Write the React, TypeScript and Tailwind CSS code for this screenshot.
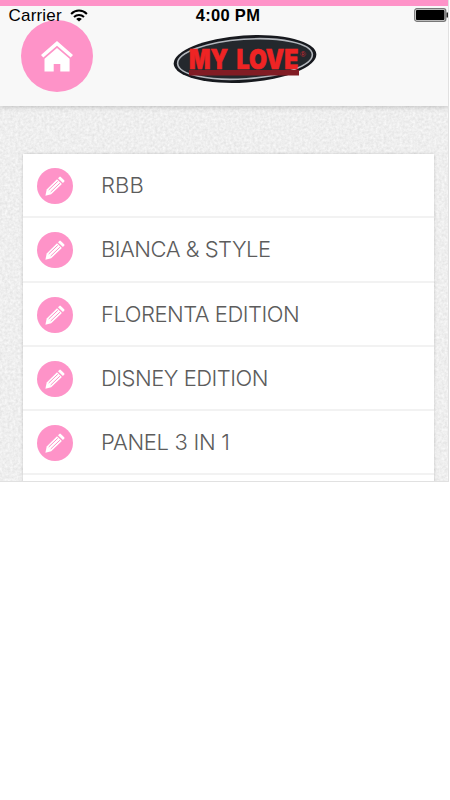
import React from 'react';

const items = ['RBB', 'BIANCA & STYLE', 'FLORENTA EDITION', 'DISNEY EDITION', 'PANEL 3 IN 1'];

const tracking: Record<string, string> = {
  'RBB': 'tracking-[0.1px]',
  'BIANCA & STYLE': 'tracking-[-0.5px]',
  'FLORENTA EDITION': 'tracking-[-0.5px]',
  'DISNEY EDITION': 'tracking-[-0.5px]',
  'PANEL 3 IN 1': 'tracking-[-0.3px]',
};

function WifiIcon() {
  return (
    <svg width="18" height="13" viewBox="0 0 18 13" fill="none" stroke="#000" strokeWidth="2">
      <path d="M1.1 5C5.6 .4 12.4 .4 16.9 5" />
      <path d="M4 8C6.9 5.2 11.1 5.2 14 8" />
      <path d="M9 12.6L6.2 9.9Q9 7.5 11.8 9.9Z" fill="#000" stroke="none" />
    </svg>
  );
}

function BatteryIcon() {
  return (
    <svg width="34" height="14" viewBox="0 0 34 14">
      <rect x=".75" y=".75" width="31" height="12.5" rx="2" fill="#fff" stroke="#777" strokeWidth="1.3" />
      <rect x="2" y="2" width="28.5" height="10" rx=".8" fill="#000" />
      <path d="M32.5 4.5H34V9.5H32.5Z" fill="#222" />
    </svg>
  );
}

function StatusBar() {
  return (
    <div className="absolute inset-x-0 top-[6px] z-10 grid h-[18px] grid-cols-3 items-center text-[17px] leading-[18px] text-black">
      <div className="flex h-[18px] items-center gap-[8px] pl-[8.5px]">
        <span className="pt-px tracking-[0.2px]">Carrier</span>
        <WifiIcon />
      </div>
      <span className="h-[18px] pl-[8px] text-center text-[16.5px] font-bold tracking-[0.3px]">4:00 PM</span>
      <div className="flex h-[18px] items-center justify-end">
        <BatteryIcon />
      </div>
    </div>
  );
}

function HomeIcon() {
  return (
    <svg width="32" height="31" viewBox="0 0 32 31" fill="#fff">
      <path d="M16 0L32 14L29.7 16.6L16 4.8L2.3 16.6L0 14Z" />
      <path d="M16 7L28.6 17.8V30.5H19.3V23H12.7V30.5H3.5V17.8Z" />
    </svg>
  );
}

function PencilIcon() {
  return (
    <svg width="20" height="20" viewBox="0 0 20 20">
      <g fill="#fff">
        <path d="M14.3 .9Q15 .2 15.8 .9L19.2 4.3Q19.9 5 19.2 5.8L17.9 7L13 2.2Z" />
        <path d="M12 3.2L16.9 8L6.2 18.2L.4 19.7L1.7 13.4Z" />
      </g>
      <path d="M3.7 14L12.8 5.3M5.7 16L14.9 7.2" stroke="#fe93c8" strokeWidth="1" />
    </svg>
  );
}

function Logo() {
  return (
    <svg width="146" height="52" viewBox="0 0 146 52">
      <g transform="rotate(-4 73 26)">
        <ellipse cx="73" cy="26" rx="71.5" ry="23.5" fill="#17191e" />
        <ellipse cx="73" cy="26" rx="67.5" ry="19.8" fill="#24282d" stroke="#b3b7bd" strokeWidth="1.6" />
      </g>
      <path d="M17 37H127V42.5H17Z" fill="#811c24" />
      <g fill="#ef2424" stroke="#ef2424" strokeWidth=".6" className="font-['Inter',sans-serif] text-[27px] font-black">
        <text x="17" y="35.5" textLength="39" lengthAdjust="spacingAndGlyphs">MY</text>
        <text x="64.5" y="35.5" textLength="62" lengthAdjust="spacingAndGlyphs">LOVE</text>
      </g>
      <text x="128" y="23.5" fill="#cf2630" className="text-[8px]">®</text>
    </svg>
  );
}

function PaperTexture() {
  return (
    <svg className="absolute inset-0 h-full w-full" aria-hidden="true">
      <filter id="paper" x="0" y="0" width="100%" height="100%" colorInterpolationFilters="sRGB">
        <feTurbulence type="fractalNoise" baseFrequency="0.38" numOctaves="2" seed="4" />
        <feColorMatrix values="0.12 0 0 0 0.875  0.12 0 0 0 0.875  0.12 0 0 0 0.875  0 0 0 0 1" />
      </filter>
      <rect width="100%" height="100%" filter="url(#paper)" />
    </svg>
  );
}

export default function App() {
  return (
    <div className="h-[800px] w-[450px] overflow-hidden bg-white font-['Liberation_Sans',Arial,sans-serif]">
      <div className="relative h-[482px] w-[449px] overflow-hidden border-r border-b border-[#e1e1e1] bg-[#ececec]">
        <PaperTexture />
        <StatusBar />
        <header className="relative flex h-[106px] items-start border-t-[6px] border-[#fe93c8] bg-[#f8f8f8] pl-[21px] shadow-[0_1px_5px_rgba(0,0,0,0.2)]">
          <div className="mt-[14px] flex h-[72px] w-[72px] items-center justify-center rounded-full bg-[#fe93c8]">
            <HomeIcon />
          </div>
          <div className="mt-[27px] ml-[79px]">
            <Logo />
          </div>
        </header>
        <main className="relative pt-[48px] pr-[14px] pl-[23px]">
          <ul className="h-[340px] bg-white shadow-[0_0_3px_rgba(0,0,0,0.18)]">
            {items.map((item) => (
              <li key={item} className="flex h-[64.3px] items-center border-b-2 border-[#f2f2f2] pt-[2px] pl-[14px]">
                <span className="flex h-[36px] w-[36px] shrink-0 items-center justify-center rounded-full bg-[#fe93c8]">
                  <PencilIcon />
                </span>
                <span className={`ml-[28px] pb-[2px] font-['Inter',sans-serif] text-[22px] leading-[30px] font-light whitespace-nowrap text-[#5c5c5c] ${tracking[item]}`}>
                  {item}
                </span>
              </li>
            ))}
          </ul>
        </main>
      </div>
    </div>
  );
}
